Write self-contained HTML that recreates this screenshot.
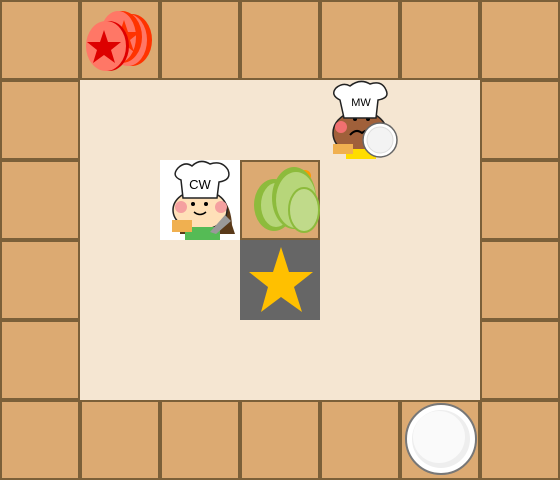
<!DOCTYPE html>
<html><head><style>
html,body{margin:0;padding:0;width:560px;height:480px;overflow:hidden;background:#f5e6d2}
</style></head><body>
<svg width="560" height="480" viewBox="0 0 560 480" xmlns="http://www.w3.org/2000/svg" font-family="Liberation Sans, sans-serif">
<rect width="560" height="480" fill="#f5e6d2"/>
<g fill="#dcaa72" stroke="#7b6039" stroke-width="2">
<rect x="1" y="1" width="78" height="78"/><rect x="81" y="1" width="78" height="78"/><rect x="161" y="1" width="78" height="78"/><rect x="241" y="1" width="78" height="78"/><rect x="321" y="1" width="78" height="78"/><rect x="401" y="1" width="78" height="78"/><rect x="481" y="1" width="78" height="78"/>
<rect x="1" y="81" width="78" height="78"/><rect x="481" y="81" width="78" height="78"/>
<rect x="1" y="161" width="78" height="78"/><rect x="481" y="161" width="78" height="78"/>
<rect x="1" y="241" width="78" height="78"/><rect x="481" y="241" width="78" height="78"/>
<rect x="1" y="321" width="78" height="78"/><rect x="481" y="321" width="78" height="78"/>
<rect x="1" y="401" width="78" height="78"/><rect x="81" y="401" width="78" height="78"/><rect x="161" y="401" width="78" height="78"/><rect x="241" y="401" width="78" height="78"/><rect x="321" y="401" width="78" height="78"/><rect x="401" y="401" width="78" height="78"/><rect x="481" y="401" width="78" height="78"/>
<rect x="241" y="161" width="78" height="78"/>
</g>
<!-- tomatoes -->
<ellipse cx="132" cy="40" rx="20" ry="26" fill="#ff3300"/>
<ellipse cx="128" cy="40" rx="19" ry="26" fill="#ff7766"/>
<ellipse cx="122" cy="37" rx="20" ry="26" fill="#ff3300"/>
<ellipse cx="118" cy="37" rx="18" ry="26" fill="#ff7766"/>
<polygon points="124,20 128,32 140,32 130,40 134,52 124,44 114,52 118,40 108,32 120,32" fill="#ff3300"/>
<ellipse cx="109" cy="46" rx="20" ry="25" fill="#e00000"/>
<ellipse cx="106" cy="46" rx="20" ry="25" fill="#ff7766"/>
<polygon points="104,30 108,42 121,42 111,50 115,63 104,55 93,63 97,50 87,42 100,42" fill="#dd0000"/>
<!-- star tile -->
<rect x="240" y="240" width="80" height="80" fill="#666"/>
<polygon points="281,247 289,272 313,272 294,287 302,312 281,297 261,312 268,287 249,272 273,272" fill="#ffc000"/>
<!-- plate -->
<circle cx="441" cy="439" r="35" fill="#fff" stroke="#777" stroke-width="2"/>
<circle cx="441" cy="439" r="29" fill="#eee"/>
<circle cx="439" cy="437" r="26" fill="#fafafa"/>
<!-- lettuce -->
<circle cx="305" cy="176" r="6" fill="#ff9900"/>
<ellipse cx="274" cy="205" rx="20" ry="26" fill="#8dbb3c"/>
<ellipse cx="276" cy="205" rx="15" ry="22" fill="#b7d67a"/>
<ellipse cx="294" cy="198" rx="22" ry="31" fill="#8dbb3c"/>
<ellipse cx="296" cy="200" rx="20" ry="28" fill="#b7d67a"/>
<ellipse cx="304" cy="210" rx="15" ry="22" fill="#c0da8a" stroke="#8dbb3c" stroke-width="2"/>
<!-- chef CW -->
<rect x="160" y="160" width="80" height="80" fill="#fff"/>
<path d="M180,222 Q175,195 200,190 Q230,190 232,225 L235,234 L180,234 Z" fill="#5a3a1a"/>
<ellipse cx="200" cy="210" rx="27" ry="20" fill="#ffe0b8" stroke="#222" stroke-width="1.5"/>
<rect x="185" y="227" width="35" height="13" fill="#55bb55"/>
<circle cx="181" cy="207" r="6" fill="#f5a0a0"/>
<circle cx="221" cy="207" r="6" fill="#f5a0a0"/>
<circle cx="193" cy="204" r="2" fill="#000"/><circle cx="206" cy="204" r="2" fill="#000"/>
<path d="M194,212 Q200,217 206,212" stroke="#000" stroke-width="1.5" fill="none"/>
<path d="M183,198 L181,180 Q171,176 178,168 Q185,161 192,166 Q200,158 210,164 Q222,160 228,170 Q232,180 219,182 L217,198 Z" fill="#fff" stroke="#222" stroke-width="1.5"/>
<text x="200" y="189" font-size="13" text-anchor="middle" fill="#000">CW</text>
<rect x="172" y="220" width="20" height="12" fill="#f0b050"/>
<path d="M210,232 L225,215 L231,221 L216,234 Z" fill="#999"/>
<!-- chef MW -->
<ellipse cx="360" cy="133" rx="27" ry="22" fill="#a0603a" stroke="#222" stroke-width="1.5"/>
<rect x="346" y="149" width="30" height="10" fill="#ffdd00"/>
<circle cx="341" cy="127" r="6" fill="#f07070"/>
<circle cx="355" cy="119" r="2" fill="#000"/><circle cx="368" cy="119" r="2" fill="#000"/>
<path d="M350,135 Q356,128 362,133 Q368,128 372,133" stroke="#000" stroke-width="2" fill="none"/>
<path d="M344,118 L340,100 Q330,95 336,88 Q343,82 350,86 Q360,78 370,84 Q382,80 386,90 Q390,98 378,100 L376,118 Z" fill="#fff" stroke="#222" stroke-width="1.5"/>
<text x="361" y="106" font-size="11" text-anchor="middle" fill="#000">MW</text>
<rect x="333" y="144" width="20" height="10" fill="#f0b050"/>
<circle cx="380" cy="140" r="17" fill="#fff" stroke="#666" stroke-width="1.5"/>
<circle cx="380" cy="140" r="13" fill="#f3f3f3" stroke="#ddd"/>
</svg>
</body></html>
